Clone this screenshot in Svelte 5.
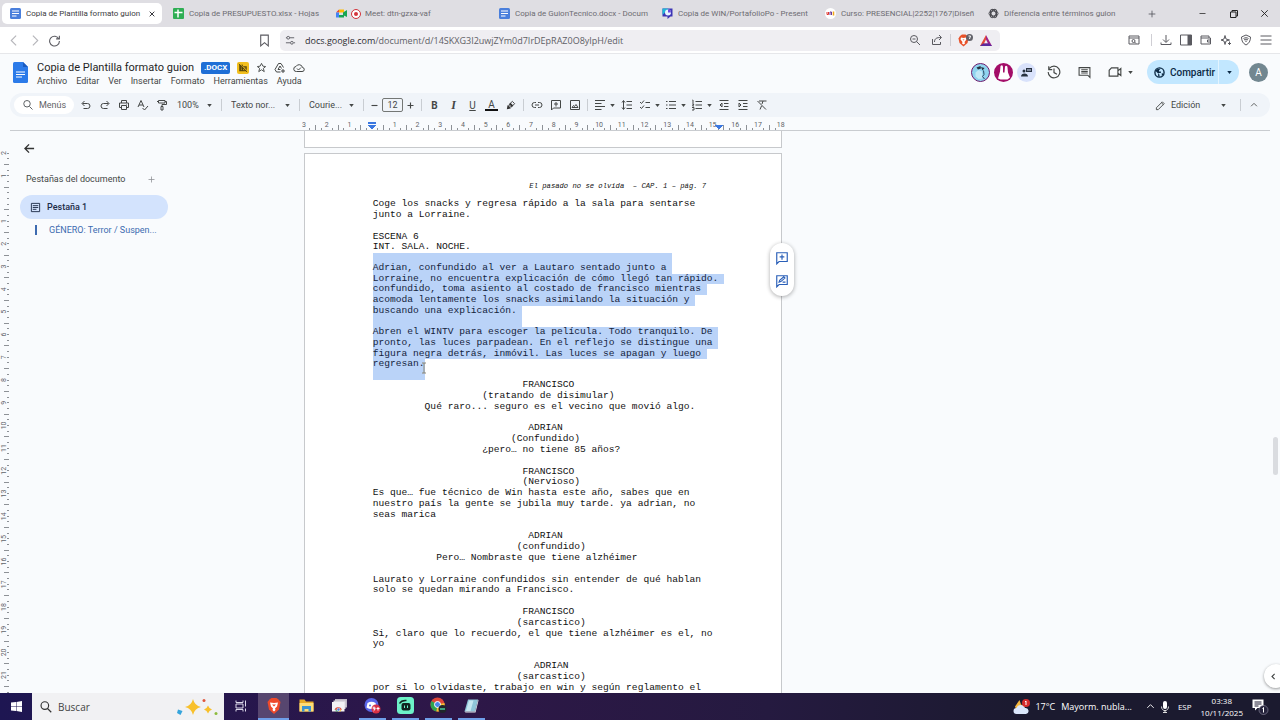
<script lang="ts">
  /** Document editor open in a browser window: tab strip, address bar,
   *  editor chrome, the script page and the desktop taskbar. */
  const TABS = [
    { icon: 'docs', title: 'Copia de Plantilla formato guion' },
    { icon: 'sheets', title: 'Copia de PRESUPUESTO.xlsx - Hojas' },
    { icon: 'meet', title: 'Meet: dtn-gzxa-vaf' },
    { icon: 'docs', title: 'Copia de GuionTecnico.docx - Docum' },
    { icon: 'slides', title: 'Copia de WIN/PortafolioPo - Present' },
    { icon: 'course', title: 'Curso: PRESENCIAL|2252|1767|Diseñ' },
    { icon: 'gpt', title: 'Diferencia entre términos guion' },
  ];

  const MENUS = ['Archivo', 'Editar', 'Ver', 'Insertar', 'Formato', 'Herramientas', 'Ayuda'];

  // stroke paths on a 24 unit grid
  const ICONS: Record<string, string> = {
    back: 'M15 3 6 12l9 9',
    forward: 'M9 3l9 9-9 9',
    reload: 'M20 9A9 9 0 1 0 21 13M21 3v6h-6',
    bookmark: 'M5 2h14v20l-7-6-7 6z',
    tune: 'M2 6h2M10 6h10M2 17h9M19 17h3M7 3a3 3 0 1 0 0 6 3 3 0 1 0 0-6M15 14a3 3 0 1 0 0 6 3 3 0 1 0 0-6',
    zoomout: 'M10 3a7 7 0 1 0 0 14 7 7 0 1 0 0-14M15 15l7 7M7 10h6',
    share: 'M3 10v11h16v-5M7 16c0-7 4-9 13-9M16 2l5 5-5 5',
    lens: 'M2 4h20v16H2zM2 8h20M11 11a3 3 0 1 0 0 6 3 3 0 1 0 0-6M13 16l3 3',
    download: 'M12 2v14M6 11l6 6 6-6M2 17v4h20v-4',
    wallet: 'M2 4h16v4M2 4v16h19V8H2M21 12h-6v4h6',
    leo: 'M10 3l2 7 7 2-7 2-2 7-2-7-6-2 6-2zM19 15v7M16 19h6',
    vpn: 'M12 2l9 4c0 8-3 13-9 16C6 19 3 14 3 6zM7 9c3-2 7-2 10 0M8 12c3-2 5-2 8 0M10 15c1-1 3-1 4 0',
    menu: 'M1 4h22M1 12h22M1 20h22',
    plus: 'M12 4v16M4 12h16',
    minus: 'M4 12h16',
    close: 'M5 5l14 14M19 5 5 19',
    search: 'M10 3a6 6 0 1 0 0 13 6 6 0 1 0 0-13M15 15l6 6',
    star: 'M12 3l3 6 6 1-5 4 2 7-6-4-6 4 2-7-5-4 6-1z',
    drive: 'M13 20H5l-3-5L9 3h5l5 8M8 15l4-7 3 5M8 15h5M18 14v8M14 18h8',
    cloud: 'M7 19h11a4 4 0 0 0 1-8A7 7 0 0 0 6 9a5 5 0 0 0 1 10zM8 13l3 3 5-5',
    undo: 'M7 19h8a5 5 0 0 0 0-10H5M9 4 4 9l5 5',
    redo: 'M17 19H9A5 5 0 0 1 9 9h10M15 4l5 5-5 5',
    print: 'M7 8V3h10v5M7 17H3V8h18v9h-4M7 13h10v8H7zM17 11h1',
    spell: 'M2 16 8 3l6 13M4 12h8M11 18l4 4 7-8',
    paint: 'M5 3h13v5H5zM18 5h3v6h-9v4M10 15h4v7h-4zM5 5H2',
    link: 'M10 7H7a5 5 0 0 0 0 10h3M14 7h3a5 5 0 0 1 0 10h-3M8 12h8',
    comment: 'M3 3h18v15H7l-4 4zM12 6v9M8 10h8',
    image: 'M3 3h18v18H3zM6 17h12l-4-6-3 4-2-2z',
    align: 'M2 3h20M2 9h13M2 15h20M2 21h13',
    spacing: 'M5 4v16M2 7l3-4 3 4M2 17l3 4 3-4M11 5h11M11 12h11M11 19h11',
    check: 'M2 6l3 3 5-6M2 16l3 3 5-6M13 7h9M13 17h9',
    bullets: 'M8 5h14M8 12h14M8 19h14M2 5h3M2 12h3M2 19h3',
    numbers: 'M9 5h13M9 12h13M9 19h13M3 2h1v6M2 10h4l-3 4h3M2 17h4v5H2',
    outdent: 'M3 3h18M12 9h9M12 15h9M3 21h18M8 8l-4 4 4 4z',
    indent: 'M3 3h18M12 9h9M12 15h9M3 21h18M4 8l4 4-4 4z',
    clear: 'M6 4h15M14 4l-2 6M11 14l-3 7M3 4l17 17',
    pencil: 'M3 21v-4L16 4l4 4L7 21zM14 6l4 4',
    up: 'M5 15l7-7 7 7',
    history: 'M4 6a10 10 0 1 1-2 6M3 2v6h6M12 6v7l5 3',
    notes: 'M2 3h20v18l-4-4H2zM6 7h12M6 10h12M6 13h12',
    video: 'M6 5h11v14H2V9zM17 10l5-4v12l-5-4z',
    arrow: 'M22 12H3M11 3l-9 9 9 9',
    tab: 'M3 3h18v18H3zM6 8h12M6 12h12M6 16h8',
    suggest: 'M3 3h18v15H7l-4 4zM7 14l1-3 7-6 2 2-7 6zM13 14h5',
    left: 'M15 5l-7 7 7 7',
  };

  type Line = { text: string; mark?: boolean; before?: boolean; after?: boolean };

  const LINES: Line[] = [
    { text: 'Coge los snacks y regresa rápido a la sala para sentarse' },
    { text: 'junto a Lorraine.' },
    { text: '' },
    { text: 'ESCENA 6' },
    { text: 'INT. SALA. NOCHE.' },
    { text: 'Adrian, confundido al ver a Lautaro sentado junto a ', mark: true, before: true },
    { text: 'Lorraine, no encuentra explicación de cómo llegó tan rápido. ', mark: true },
    { text: 'confundido, toma asiento al costado de francisco mientras ', mark: true },
    { text: 'acomoda lentamente los snacks asimilando la situación y ', mark: true },
    { text: 'buscando una explicación. ', mark: true, after: true },
    { text: 'Abren el WINTV para escoger la película. Todo tranquilo. De ', mark: true },
    { text: 'pronto, las luces parpadean. En el reflejo se distingue una ', mark: true },
    { text: 'figura negra detrás, inmóvil. Las luces se apagan y luego ', mark: true },
    { text: 'regresan.', mark: true, after: true },
    { text: '                          FRANCISCO' },
    { text: '                   (tratando de disimular)' },
    { text: '         Qué raro... seguro es el vecino que movió algo.' },
    { text: '' },
    { text: '                           ADRIAN' },
    { text: '                        (Confundido)' },
    { text: '                   ¿pero… no tiene 85 años?' },
    { text: '' },
    { text: '                          FRANCISCO' },
    { text: '                          (Nervioso)' },
    { text: 'Es que… fue técnico de Win hasta este año, sabes que en' },
    { text: 'nuestro país la gente se jubila muy tarde. ya adrian, no' },
    { text: 'seas marica' },
    { text: '' },
    { text: '                           ADRIAN' },
    { text: '                         (confundido)' },
    { text: '           Pero… Nombraste que tiene alzhéimer' },
    { text: '' },
    { text: 'Laurato y Lorraine confundidos sin entender de qué hablan' },
    { text: 'solo se quedan mirando a Francisco.' },
    { text: '' },
    { text: '                          FRANCISCO' },
    { text: '                         (sarcastico)' },
    { text: 'Si, claro que lo recuerdo, el que tiene alzhéimer es el, no' },
    { text: 'yo' },
    { text: '' },
    { text: '                            ADRIAN' },
    { text: '                         (sarcastico)' },
    { text: 'por si lo olvidaste, trabajo en win y según reglamento el' },
  ];

  // 1 cm of paper on screen, with the page zoom applied
  const CM = 22.7;
  const across = Array.from({ length: 22 }, (_, i) => i - 3);
  const down = Array.from({ length: 24 }, (_, i) => i - 2);

  let activeTab = $state(0);
  let fontSize = $state(12);
</script>

{#snippet icon(name: string, size = 12, width = 2)}
  <svg class="ico" viewBox="0 0 24 24" width={size} height={size} stroke-width={width} aria-hidden="true">
    <path d={ICONS[name]} />
  </svg>
{/snippet}

{#snippet caret()}
  <svg class="caret" viewBox="0 0 6 4" width="5" height="3" aria-hidden="true"><path d="M0 0h6L3 4z" /></svg>
{/snippet}

{#snippet tool(name: string, label: string)}
  <button class="tool" aria-label={label}>{@render icon(name, 12, 2)}</button>
{/snippet}

{#snippet toolMenu(name: string, label: string)}
  <button class="tool wide" aria-label={label}>{@render icon(name, 12, 2)}{@render caret()}</button>
{/snippet}

{#snippet favicon(name: string)}
  <svg class="fav" viewBox="0 0 22 22" width="11" height="11" aria-hidden="true">
    {#if name === 'docs'}
      <rect width="22" height="22" rx="3" fill="#4a7fdc" />
      <path d="M4 6h14M4 11h14M4 16h9" stroke="#fff" stroke-width="2" />
    {:else if name === 'sheets'}
      <rect width="22" height="22" rx="2" fill="#2fae54" />
      <path d="M10 3v16M3 9h16" stroke="#fff" stroke-width="3" />
    {:else if name === 'meet'}
      <path d="M0 9l6-6v6z" fill="#ea4335" />
      <path d="M6 3h10v6H6z" fill="#fbbc04" />
      <path d="M0 9h6v10H0z" fill="#4285f4" />
      <path d="M6 14h10v5H6zM14 9l8-5v14l-8-4z" fill="#18a551" />
    {:else if name === 'slides'}
      <path d="M1 1h20v16h-4l-6 5v-5H1z" fill="#3d35b5" />
      <path d="M1 1h12L1 14z" fill="#22b8d8" />
      <circle cx="12" cy="9" r="6" fill="#e8f5ff" />
      <path d="M12 9V3a6 6 0 0 1 6 6z" fill="#6d4be0" />
    {:else if name === 'course'}
      <circle cx="11" cy="11" r="11" fill="#fff" />
      <path d="M4 8v5h3V8" stroke="#e0342c" stroke-width="2" fill="none" />
      <path d="M10 14V8h3v6" stroke="#6a3a9c" stroke-width="2" fill="none" />
      <path d="M17 7v8" stroke="#f2a71b" stroke-width="3" />
    {:else}
      <g fill="none" stroke="#46464c" stroke-width="2">
        <ellipse cx="11" cy="11" rx="9" ry="5" />
        <ellipse cx="11" cy="11" rx="9" ry="5" transform="rotate(60 11 11)" />
        <ellipse cx="11" cy="11" rx="9" ry="5" transform="rotate(120 11 11)" />
      </g>
    {/if}
  </svg>
{/snippet}

<div class="screen">
  <div class="tabs">
    {#each TABS as t, i}
      <button class="tab" class:active={activeTab === i} onclick={() => (activeTab = i)}>
        {@render favicon(t.icon)}
        {#if t.icon === 'meet'}<span class="rec"></span>{/if}
        <span class="tab-title">{t.title}</span>
        {#if activeTab === i}{@render icon('close', 8, 3)}{/if}
      </button>
    {/each}
    <button class="newtab" aria-label="Nueva pestaña">{@render icon('plus', 10, 2)}</button>
    <div class="winbtns">
      <button aria-label="Minimizar">{@render icon('minus', 9, 2)}</button>
      <button aria-label="Restaurar">
        <svg class="ico" viewBox="0 0 16 16" width="8" height="8" stroke-width="2"><path d="M1 4h11v11H1zM4 4V1h11v11h-3" /></svg>
      </button>
      <button aria-label="Cerrar">{@render icon('close', 11, 2)}</button>
    </div>
  </div>

  <div class="address">
    <div class="nav">
      <button class="dim" aria-label="Atrás">{@render icon('back', 13, 2)}</button>
      <button class="dim" aria-label="Adelante">{@render icon('forward', 13, 2)}</button>
      <button aria-label="Recargar">{@render icon('reload', 13, 2)}</button>
    </div>
    <button class="bm" aria-label="Marcador">{@render icon('bookmark', 13, 2)}</button>
    <div class="urlbar">
      {@render icon('tune', 11, 2)}
      <a class="url" href="#doc"><b>docs.google.com</b>/document/d/14SKXG3I2uwjZYm0d7IrDEpRAZ0O8yIpH/edit</a>
      <button class="zo" aria-label="Alejar">{@render icon('zoomout', 12, 2)}</button>
      <button aria-label="Compartir página">{@render icon('share', 12, 2)}</button>
      <span class="vsep"></span>
      <button aria-label="Escudo">
        <svg viewBox="0 0 30 26" width="15" height="13">
          <path d="M4 4l4-3h7l4 3 2 5-2 9-8 7-8-7-2-9z" fill="#e8522a" />
          <path d="M6 7l5 1 5-1 1 4-4 5 1 3-3 2-3-2 1-3-4-5z" fill="#fff" />
          <path d="M9 11l2 2 2-2z" fill="#e8522a" />
          <circle cx="23" cy="7" r="7" fill="#62626a" />
          <path d="M21 4h4l-2 6" fill="none" stroke="#fff" stroke-width="2" />
        </svg>
      </button>
      <button aria-label="Recompensas">
        <svg viewBox="0 0 24 22" width="12" height="11">
          <path d="M12 0 0 22h12l0-5H8l4-8z" fill="#e2483b" />
          <path d="M12 0l12 22H12v-5h4l-4-8z" fill="#a0238a" />
          <path d="M0 22h24l-6-5H6z" fill="#5b2a9e" />
        </svg>
      </button>
    </div>
    <div class="exts">
      <button aria-label="Buscar con lente">{@render icon('lens', 12, 2)}</button>
      <span class="vsep"></span>
      <button aria-label="Descargas">{@render icon('download', 12, 2)}</button>
      <button aria-label="Panel lateral">
        <svg viewBox="0 0 24 24" width="12" height="12"><path d="M1 2h22v20H1z" fill="none" stroke="#5a5a60" stroke-width="2" /><path d="M15 2h8v20h-8z" fill="#5a5a60" /></svg>
      </button>
      <button aria-label="Cartera">{@render icon('wallet', 12, 2)}</button>
      <button aria-label="Asistente">{@render icon('leo', 12, 2)}</button>
      <button aria-label="VPN">{@render icon('vpn', 12, 2)}</button>
      <button aria-label="Menú">{@render icon('menu', 12, 2)}</button>
    </div>
  </div>

  <header class="head">
    <svg class="logo" viewBox="0 0 30 42" width="15" height="21" aria-hidden="true">
      <path d="M3 0h17l10 10v29a3 3 0 0 1-3 3H3a3 3 0 0 1-3-3V3a3 3 0 0 1 3-3z" fill="#2c7be9" />
      <path d="M20 0l10 10H20z" fill="#1a5bc0" />
      <path d="M6 20h18M6 25h18M6 30h12" stroke="#fff" stroke-width="2" />
    </svg>
    <div class="titles">
      <div class="title-row">
        <h1>Copia de Plantilla formato guion</h1>
        <span class="ext">.DOCX</span>
        <span class="badge">
          <svg viewBox="0 0 24 24" width="10" height="10"><path d="M3 4h9v4h9v12H3z" fill="#54430a" /><path d="M7 8h2M7 12h2M7 16h2M12 12h6M12 16h6" stroke="#f2bf1d" stroke-width="2" /><path d="M4 1l20 20" stroke="#f2bf1d" stroke-width="2" /><path d="M2 2l20 20" stroke="#54430a" stroke-width="2" /></svg>
        </span>
        <button aria-label="Destacar">{@render icon('star', 11, 2)}</button>
        <button aria-label="Añadir a Drive">{@render icon('drive', 12, 2)}</button>
        <button aria-label="Estado del documento">{@render icon('cloud', 12, 2)}</button>
      </div>
      <nav class="menus">
        {#each MENUS as m}
          <button>{m}</button>
        {/each}
      </nav>
    </div>
    <div class="people">
      <svg viewBox="0 0 38 38" width="19" height="19" aria-hidden="true">
        <circle cx="19" cy="19" r="18" fill="#8fd4ef" stroke="#6d1b6d" stroke-width="2" />
        <path d="M11 9l8-3 1 5-6 2zM20 8l7 2-4 5z" fill="#27313f" />
        <path d="M9 19l6-5 7 3 1 14-8 1-6-5z" fill="#c0e8f6" />
        <path d="M25 15l1 8-3 4 4 5" fill="none" stroke="#2c4963" stroke-width="2" />
      </svg>
      <svg viewBox="0 0 38 38" width="19" height="19" aria-hidden="true">
        <circle cx="19" cy="19" r="19" fill="#a30d68" />
        <path d="M8 31l4-14 1-11c3-3 5-1 5 3v10h3l1-12c2-3 5-1 5 2l1 10 4 10-5 4H13z" fill="#fff" />
      </svg>
      <svg viewBox="0 0 38 38" width="19" height="19" aria-hidden="true">
        <circle cx="19" cy="19" r="19" fill="#d9e2fb" />
        <circle cx="14" cy="16" r="3" fill="#27313f" />
        <path d="M8 27c0-8 14-8 14 0zM18 10h12v8H18z" fill="#27313f" />
        <path d="M20 14h8" stroke="#d9e2fb" stroke-width="2" />
      </svg>
    </div>
    <button class="hbtn" aria-label="Historial">{@render icon('history', 14, 2)}</button>
    <button class="hbtn" aria-label="Comentarios">{@render icon('notes', 13, 2)}</button>
    <button class="hbtn meet" aria-label="Videollamada">{@render icon('video', 14, 2)}{@render caret()}</button>
    <div class="share">
      <button class="share-main">
        <svg viewBox="0 0 24 24" width="11" height="11"><circle cx="12" cy="12" r="10" fill="none" stroke="#0c2a45" stroke-width="3" /><path d="M3 8l6 6v6l3 2v-5l-3-4h6v-3h-4V7l4-4-9 2zM17 13l4 2-4 5z" fill="#0c2a45" /></svg>
        Compartir
      </button>
      <button class="share-more" aria-label="Opciones para compartir">{@render caret()}</button>
    </div>
    <button class="me" aria-label="Cuenta">A</button>
  </header>

  <div class="toolbar">
    <button class="find">{@render icon('search', 12, 2)}Menús</button>
    {@render tool('undo', 'Deshacer')}
    {@render tool('redo', 'Rehacer')}
    {@render tool('print', 'Imprimir')}
    {@render tool('spell', 'Ortografía')}
    {@render tool('paint', 'Copiar formato')}
    <label class="pick zoom"><select aria-label="Zoom"><option>100%</option></select>{@render caret()}</label>
    <span class="sep"></span>
    <label class="pick para"><select aria-label="Estilos"><option>Texto nor...</option></select>{@render caret()}</label>
    <span class="sep"></span>
    <label class="pick face"><select aria-label="Fuente"><option>Courie...</option></select>{@render caret()}</label>
    <span class="sep"></span>
    <button class="step" aria-label="Reducir" onclick={() => (fontSize -= 1)}>{@render icon('minus', 9, 3)}</button>
    <input class="size" aria-label="Tamaño de fuente" bind:value={fontSize} />
    <button class="step" aria-label="Aumentar" onclick={() => (fontSize += 1)}>{@render icon('plus', 9, 3)}</button>
    <span class="sep"></span>
    <button class="tool letter"><b>B</b></button>
    <button class="tool letter serif"><i>I</i></button>
    <button class="tool letter"><u>U</u></button>
    <button class="tool letter"><span class="ink">A</span></button>
    <button class="tool" aria-label="Resaltar">
      <svg viewBox="0 0 24 24" width="11" height="11"><path d="M8 11l8-8 5 5-8 8z" fill="none" stroke="#333" stroke-width="2" /><path d="M6 11l7 7-3 1-6 1 1-6zM9 9l3-3 6 6-3 3z" fill="#333" /></svg>
    </button>
    <span class="sep"></span>
    {@render tool('link', 'Enlace')}
    {@render tool('comment', 'Comentario')}
    {@render tool('image', 'Imagen')}
    <span class="sep"></span>
    {@render toolMenu('align', 'Alinear')}
    {@render tool('spacing', 'Interlineado')}
    {@render toolMenu('check', 'Lista de control')}
    {@render toolMenu('bullets', 'Viñetas')}
    {@render toolMenu('numbers', 'Lista numerada')}
    {@render tool('outdent', 'Reducir sangría')}
    {@render tool('indent', 'Aumentar sangría')}
    {@render tool('clear', 'Borrar formato')}
    <button class="mode">{@render icon('pencil', 11, 2)}<span>Edición</span>{@render caret()}</button>
    <span class="sep"></span>
    <button class="tool" aria-label="Ocultar menús">{@render icon('up', 10, 2)}</button>
  </div>

  <div class="ruler">
    <svg width="490" height="12" aria-hidden="true">
      {#each across as n, i}
        {#if n !== 0}
          <text x={6 + i * CM} y="9" text-anchor="middle">{Math.abs(n)}</text>
        {/if}
        {#if i < 21}
          <path d="M{6 + (i + 0.25) * CM} 10v2M{6 + (i + 0.5) * CM} 7v5M{6 + (i + 0.75) * CM} 10v2" />
        {/if}
      {/each}
      <path class="stop" d="M70 4h8v2h-8zM70 7h8l-4 5z" />
      <path class="stop" d="M417 7h8l-4 5z" />
    </svg>
  </div>

  <main class="work">
    <svg class="vruler" width="10" height="562" aria-hidden="true">
      {#each down as n, i}
        {@const y = 22 + i * CM}
        {#if n !== 0}
          <text transform="translate(6 {y}) rotate(-90)" text-anchor="middle">{Math.abs(n)}</text>
        {/if}
        <path d="M7 {y}h2M7 {y + CM / 4}h2M4 {y + CM / 2}h5M7 {y + (CM * 3) / 4}h2" />
      {/each}
    </svg>

    <aside class="outline">
      <button class="back" aria-label="Cerrar panel">{@render icon('arrow', 11, 3)}</button>
      <div class="outline-head">
        <h2>Pestañas del documento</h2>
        <button aria-label="Añadir pestaña">{@render icon('plus', 9, 2)}</button>
      </div>
      <button class="doctab">{@render icon('tab', 11, 2)}Pestaña 1</button>
      <a class="heading" href="#genero">GÉNERO: Terror / Suspen...</a>
    </aside>

    <div class="canvas">
      <div class="sheet prev"></div>
      <article class="sheet">
        <p class="running">El pasado no se olvida&nbsp; – CAP. 1 – pág. 7</p>
        {#each LINES as l}
          <div class="line">
            {#if l.mark}<mark class:before={l.before} class:after={l.after}>{l.text}</mark>{:else}{l.text}{/if}
          </div>
        {/each}
      </article>
      <svg class="ibeam" viewBox="0 0 6 12" width="6" height="12" aria-hidden="true">
        <path d="M1 1h4M3 1v10M1 11h4" fill="none" stroke="#8b8674" stroke-width="1" />
      </svg>
      <div class="float">
        <button aria-label="Añadir comentario">{@render icon('comment', 14, 2)}</button>
        <button aria-label="Sugerir cambios">{@render icon('suggest', 14, 2)}</button>
      </div>
    </div>
    <span class="thumb"></span>
    <button class="expand" aria-label="Mostrar panel lateral">{@render icon('left', 9, 3)}</button>
  </main>

  <footer class="taskbar">
    <button class="start" aria-label="Inicio">
      <svg viewBox="0 0 22 22" width="11" height="11"><path d="M0 3l10-1v8H0zM11 2l11-2v10H11zM0 11h10v9L0 19zM11 11h11v11l-11-2z" fill="#fff" /></svg>
    </button>
    <label class="tsearch">
      {@render icon('search', 14, 2)}
      <input placeholder="Buscar" aria-label="Buscar" />
      <svg viewBox="0 0 84 36" width="42" height="18" aria-hidden="true">
        <path d="M34 2q3 13 16 16-13 3-16 16-3-13-16-16 13-3 16-16z" fill="#f8c02c" />
        <path d="M64 15q2 6 8 8-6 2-8 8-2-6-8-8 6-2 8-8z" fill="#f8c02c" />
        <path d="M4 23l9 3-4 8-7-4z" fill="#35a4dc" />
        <circle cx="56" cy="5" r="3" fill="#e0563b" />
        <circle cx="80" cy="31" r="3" fill="#8dbb3e" />
      </svg>
    </label>
    <button class="task" aria-label="Vista de tareas">
      <svg viewBox="0 0 24 24" width="12" height="12" fill="none" stroke="#dcd9ea" stroke-width="2"><path d="M2 1v4h14V1M2 23v-4h14v4M2 8h14v8H2zM21 1v12M21 17v6" /></svg>
    </button>
    <button class="task open current" aria-label="Brave">
      <svg viewBox="0 0 28 32" width="14" height="16"><path d="M5 3l4-3h10l4 3 4 5-3 15-10 9-10-9L1 8z" fill="#ee4a2b" /><path d="M6 9l8 1 8-1-2 8-4 4 1 3-3 3-3-3 1-3-4-4z" fill="#fff" /><path d="M10 13l4 4 4-4z" fill="#ee4a2b" /></svg>
    </button>
    <button class="task" aria-label="Explorador">
      <svg viewBox="0 0 30 26" width="15" height="13"><path d="M1 1h10l3 4h15v20H1z" fill="#e7a928" /><path d="M1 8h28v17H1z" fill="#ffdc77" /><path d="M6 14h18v11h-5v-5h-8v5H6z" fill="#3c93d1" /></svg>
    </button>
    <button class="task" aria-label="Chrome perfil">
      <svg viewBox="0 0 30 26" width="15" height="13"><path d="M6 0h24v17H6z" fill="#bdb6c4" /><path d="M3 3h24v17H3z" fill="#dcd8df" /><path d="M0 6h25v19H0z" fill="#f4f2f5" /><path d="M5 21a8 8 0 0 1 15 0l-7 2z" fill="#de4a3c" /><path d="M5 20l4 5h4z" fill="#33a457" /><path d="M20 20l-3 5h-4z" fill="#f4c02c" /><circle cx="13" cy="21" r="3" fill="#477fe0" stroke="#fff" /></svg>
    </button>
    <button class="task open" aria-label="Discord">
      <svg viewBox="0 0 34 34" width="17" height="17"><circle cx="15" cy="16" r="14" fill="#5966e8" /><path d="M7 12q8-5 16 0l2 9q-10 6-20 0z" fill="#fff" /><circle cx="12" cy="17" r="2" fill="#5966e8" /><circle cx="24" cy="24" r="9" fill="#d93145" /><path d="M22 22a2 2 0 1 0-4 0 2 2 0 1 0 4 0q0 5-3 6M28 20v7M25 23h6" fill="none" stroke="#fff" stroke-width="2" /></svg>
    </button>
    <button class="task open" aria-label="Grabadora">
      <svg viewBox="0 0 34 34" width="17" height="17"><rect width="34" height="34" rx="7" fill="#6df2c8" /><rect x="9" y="12" width="18" height="15" rx="4" fill="#11241f" /><path d="M5 13q4-7 14-6" fill="none" stroke="#11241f" stroke-width="3" /><path d="M15 17v5M21 17v5" stroke="#6df2c8" stroke-width="2" /></svg>
    </button>
    <button class="task open" aria-label="Chrome">
      <svg viewBox="0 0 34 34" width="17" height="17"><circle cx="15" cy="15" r="14" fill="#e0473a" /><path d="M15 15 3 8a14 14 0 0 0 10 21z" fill="#2da44f" /><path d="M15 15l-2 14A14 14 0 0 0 29 12z" fill="#f5c231" /><circle cx="15" cy="15" r="6" fill="#4a86e8" stroke="#fff" stroke-width="2" /><circle cx="25" cy="24" r="8" fill="#20262c" /><path d="M20 24h10" stroke="#48cf9c" stroke-width="3" /></svg>
    </button>
    <button class="task open" aria-label="Bloc de notas">
      <svg viewBox="0 0 30 28" width="15" height="14"><path d="M8 1h20l-6 24H1z" fill="#8fc6d8" /><path d="M10 3h9l-6 21H4z" fill="#c6e8f1" /><path d="M28 1l1 2-6 24H3l-2-2h21z" fill="#e7eef0" /></svg>
    </button>
    <div class="tray">
      <svg viewBox="0 0 34 32" width="17" height="16" aria-hidden="true">
        <path d="M13 2l3 9 9 4-18 8-3-8z" fill="#f5b63c" />
        <path d="M7 30a6 6 0 0 1 0-12 9 9 0 0 1 17 0 6 6 0 0 1 2 12z" fill="#dbe7fb" />
        <circle cx="26" cy="8" r="8" fill="#d52b2b" /><path d="M24 6l2-2v8" fill="none" stroke="#fff" stroke-width="2" />
      </svg>
      <span class="temp">17°C</span>
      <span class="sky">Mayorm. nubla...</span>
      {@render icon('up', 11, 2)}
      <svg class="mic" viewBox="0 0 16 24" width="8" height="12" aria-hidden="true"><rect x="4" width="8" height="16" rx="4" fill="#fff" /><path d="M1 11c0 11 14 11 14 0M8 19v4M4 23h8" fill="none" stroke="#ddd" stroke-width="2" /></svg>
      <span class="lang">ESP</span>
      <div class="clock"><span>03:38</span><span>10/11/2025</span></div>
      <svg viewBox="0 0 34 32" width="17" height="16" aria-hidden="true"><path d="M1 1h22v17H11l-5 5v-5H1z" fill="#fff" /><path d="M5 6h14M5 10h14M5 14h8" stroke="#1d1a33" stroke-width="2" /><circle cx="23" cy="22" r="9" fill="#25233c" stroke="#aaa8bd" stroke-width="1" /><path d="M21 19l2-2v10" fill="none" stroke="#fff" stroke-width="2" /></svg>
    </div>
  </footer>
</div>

<style>
  :global(body) {
    overflow: hidden;
  }
  .screen {
    height: 100vh;
    display: flex;
    flex-direction: column;
    background: #f9fbfd;
    color: #444746;
    font-family: Roboto, sans-serif;
    font-size: 9px;
    overflow: hidden;
  }
  button,
  input,
  select {
    font: inherit;
    color: inherit;
    background: none;
    border: 0;
    padding: 0;
    margin: 0;
  }
  button {
    display: flex;
    align-items: center;
    justify-content: center;
    cursor: pointer;
    white-space: nowrap;
  }
  svg {
    display: block;
    flex: none;
  }
  .ico {
    fill: none;
    stroke: currentColor;
  }
  .caret {
    fill: currentColor;
  }

  .tabs {
    flex: none;
    display: flex;
    align-items: center;
    height: 27px;
    padding-left: 2px;
    background: #dfdee3;
    font-size: 8px;
    color: #6d6c72;
  }
  .tab {
    flex: 0 1 163px;
    min-width: 0;
    height: 21px;
    padding: 0 4px 0 8px;
    gap: 5px;
    justify-content: flex-start;
    border-radius: 5px;
  }
  .tab.active {
    flex-basis: 160px;
    margin-right: 3px;
    padding-right: 6px;
    background: #fff;
    color: #3b3b40;
  }
  .tab-title {
    flex: 1;
    min-width: 0;
    overflow: hidden;
    text-align: left;
  }
  .rec {
    flex: none;
    width: 4px;
    height: 4px;
    border: 2px solid #fff;
    border-radius: 50%;
    outline: 1px solid #d3333b;
    background: #d3333b;
  }
  .newtab {
    width: 18px;
    color: #55555b;
  }
  .winbtns {
    margin-left: auto;
    display: flex;
    color: #222;
  }
  .winbtns button {
    width: 31px;
    height: 27px;
  }

  .address {
    flex: none;
    display: flex;
    align-items: center;
    height: 26px;
    padding: 0 8px;
    background: #fff;
    border-bottom: 1px solid #e6e7ea;
    color: #5a5a60;
  }
  .nav {
    display: flex;
    gap: 7px;
  }
  .dim {
    color: #b5b5ba;
  }
  .bm {
    margin-left: 197px;
    margin-right: 9px;
  }
  .urlbar {
    flex: 0 1 707px;
    min-width: 0;
    height: 21px;
    display: flex;
    align-items: center;
    gap: 7px;
    padding: 0 8px 0 5px;
    border-radius: 5px;
    background: #efeef2;
    font-family: 'Open Sans', sans-serif;
  }
  .url {
    flex: 1;
    margin-left: 2px;
    color: #606066;
    text-decoration: none;
    white-space: nowrap;
  }
  .url b {
    font-weight: 400;
    color: #2c2c31;
  }
  .zo {
    margin-right: 3px;
  }
  .vsep {
    width: 1px;
    height: 12px;
    background: #cfced4;
  }
  .exts {
    margin-left: auto;
    display: flex;
    align-items: center;
    gap: 8px;
  }
  .exts .vsep {
    margin-left: 3px;
  }

  .head {
    flex: none;
    display: flex;
    align-items: center;
    height: 36px;
    padding: 0 12px 0 13px;
  }
  .titles {
    margin-left: 9px;
    padding-top: 3px;
    flex: 1;
  }
  .title-row {
    display: flex;
    align-items: center;
    gap: 7px;
    height: 14px;
  }
  h1 {
    margin: 0;
    font-size: 11px;
    font-weight: 400;
    color: #1f1f1f;
    white-space: nowrap;
  }
  .ext {
    padding: 0 3px;
    border-radius: 2px;
    background: #1f6fd6;
    color: #fff;
    font-size: 8px;
    font-weight: 700;
    line-height: 12px;
  }
  .badge {
    padding: 1px;
    border-radius: 2px;
    background: #f2bf1d;
  }
  .menus {
    display: flex;
    gap: 9px;
    height: 12px;
  }
  .people {
    display: flex;
    gap: 4px;
    margin-right: 11px;
  }
  .hbtn {
    width: 14px;
    margin-right: 16px;
  }
  .meet {
    width: 27px;
    gap: 6px;
    margin-right: 13px;
  }
  .share {
    display: flex;
    height: 24px;
    margin-right: 10px;
    border-radius: 12px;
    background: #c2e7ff;
    color: #0c2a45;
    font-size: 10px;
    font-weight: 500;
  }
  .share-main {
    width: 72px;
    gap: 5px;
    padding-left: 4px;
    border-right: 1px solid #e3f4ff;
  }
  .share-more {
    width: 20px;
  }
  .me {
    width: 19px;
    height: 19px;
    border-radius: 50%;
    background: #728790;
    color: #fff;
    font-size: 10px;
  }

  .toolbar {
    flex: none;
    display: flex;
    align-items: center;
    height: 24px;
    margin: 3px 10px 0;
    padding: 0 7px 0 4px;
    border-radius: 12px;
    background: #f0f4f9;
  }
  .find {
    width: 60px;
    height: 18px;
    gap: 5px;
    margin-right: 2px;
    border-radius: 9px;
    background: #fff;
    color: #5f6366;
  }
  .tool {
    width: 19px;
    height: 19px;
  }
  .wide {
    width: 26px;
    gap: 4px;
  }
  .letter {
    font-size: 10px;
  }
  .serif {
    font-family: 'Liberation Serif', serif;
    font-size: 12px;
    font-weight: 700;
  }
  .ink {
    line-height: 9px;
    padding: 0 3px;
    border-bottom: 2px solid #111;
  }
  .pick {
    display: flex;
    align-items: center;
    padding: 0 6px;
  }
  .pick select {
    appearance: none;
    flex: 1;
    min-width: 0;
  }
  .zoom {
    width: 35px;
  }
  .para {
    width: 59px;
  }
  .face {
    width: 45px;
  }
  .sep {
    width: 1px;
    height: 12px;
    margin: 0 3px;
    background: #c9cdd2;
  }
  .step {
    width: 15px;
  }
  .size {
    width: 19px;
    height: 12px;
    border: 1px solid #747775;
    border-radius: 2px;
    text-align: center;
  }
  .mode {
    width: 90px;
    margin-left: auto;
    gap: 5px;
    padding: 0 11px 0 8px;
    justify-content: flex-start;
  }
  .mode span {
    flex: 1;
    text-align: left;
  }

  .ruler {
    flex: none;
    height: 12px;
    margin: 1px 10px 0;
    padding-left: 288px;
    border-bottom: 1px solid #c9ccd0;
  }
  .ruler svg,
  .vruler {
    fill: #5f6368;
    stroke: none;
    font-size: 7px;
  }
  .ruler path,
  .vruler path {
    stroke: #8d9196;
    stroke-width: 1;
    fill: none;
    shape-rendering: crispEdges;
  }
  .ruler .stop {
    fill: #3b78e0;
    stroke: none;
  }

  .work {
    flex: 1;
    min-height: 0;
    display: flex;
    position: relative;
    overflow: hidden;
  }
  .outline {
    flex: 0 0 294px;
    display: flex;
    flex-direction: column;
    align-items: flex-start;
  }
  .back {
    margin: 12px 0 0 14px;
    color: #333;
  }
  .outline-head {
    display: flex;
    align-items: center;
    justify-content: space-between;
    width: 130px;
    margin: 19px 0 0 16px;
    color: #8b8e91;
  }
  h2 {
    margin: 0;
    font-size: 9px;
    line-height: 12px;
    font-weight: 400;
    color: #444746;
    white-space: nowrap;
  }
  .doctab {
    width: 148px;
    height: 24px;
    margin: 10px 0 0 10px;
    padding-left: 10px;
    gap: 6px;
    justify-content: flex-start;
    border-radius: 12px;
    background: #d3e3fd;
    color: #1c2b46;
    font-weight: 500;
  }
  .heading {
    margin: 6px 0 0 25px;
    padding-left: 12px;
    border-left: 2px solid #3d6bb0;
    color: #3d6bb0;
    line-height: 10px;
    text-decoration: none;
    white-space: nowrap;
  }

  .canvas {
    position: relative;
    align-self: flex-start;
  }
  /* A4 at 96 dpi, shown at 60% */
  .sheet {
    zoom: 0.6;
    box-sizing: border-box;
    width: 797px;
    min-height: 1123px;
    padding: 46px 0 0 113px;
    border: 1px solid #c7c9cc;
    background: #fff;
    color: #111;
    font-family: 'Liberation Mono', monospace;
    font-size: 16px;
  }
  .prev {
    min-height: 0;
    height: 28px;
    padding: 0;
    margin-bottom: 8px;
    border-top: 0;
  }
  .running {
    margin: 0 125px 12px 0;
    text-align: right;
    font-size: 12px;
    font-style: italic;
    line-height: 18px;
  }
  .line {
    min-height: 18px;
    line-height: 18px;
    white-space: pre;
  }
  mark {
    display: inline-block;
    vertical-align: top;
    background: #bad3f8;
    color: #14233c;
  }
  .before {
    padding-top: 16px;
  }
  .after {
    padding-bottom: 17px;
  }
  .ibeam {
    position: absolute;
    top: 231px;
    left: 117px;
  }
  .float {
    position: absolute;
    top: 112px;
    right: -12px;
    width: 24px;
    height: 53px;
    display: flex;
    flex-direction: column;
    align-items: center;
    justify-content: space-evenly;
    border-radius: 12px;
    background: #fff;
    box-shadow: 0 1px 4px #0005;
    color: #2a5fb8;
  }
  .thumb {
    position: absolute;
    right: 2px;
    top: 306px;
    width: 5px;
    height: 38px;
    border-radius: 3px;
    background: #dadce0;
  }
  .expand {
    position: absolute;
    right: -8px;
    bottom: 5px;
    width: 24px;
    height: 24px;
    padding-right: 6px;
    border-radius: 50%;
    background: #fff;
    box-shadow: 0 1px 3px #0006;
  }

  .taskbar {
    flex: none;
    display: flex;
    height: 27px;
    background: linear-gradient(to right, #1e1652, #2e1748 35%, #251a40 60%, #1b1a2f 80%);
    color: #fff;
    font-family: 'Open Sans', sans-serif;
  }
  .start {
    width: 32px;
  }
  .tsearch {
    box-sizing: border-box;
    width: 192px;
    display: flex;
    align-items: center;
    gap: 5px;
    padding: 0 6px 0 7px;
    background: #f1f1f3;
    color: #333;
    font-size: 10px;
  }
  .tsearch input {
    flex: 1;
    min-width: 0;
  }
  .tsearch input::placeholder {
    color: #444;
    opacity: 1;
  }
  .task {
    box-sizing: border-box;
    width: 27px;
    margin: 0 3px;
    border-bottom: 2px solid transparent;
  }
  .open {
    border-bottom-color: #6f9fe8;
  }
  .current {
    width: 31px;
    margin: 0 1px;
    background: #57466f;
  }
  .tray {
    margin-left: auto;
    display: flex;
    align-items: center;
    padding-right: 11px;
    white-space: nowrap;
  }
  .temp {
    margin: 0 6px 0 5px;
  }
  .sky {
    margin-right: 13px;
  }
  .mic {
    margin: 0 9px 0 5px;
  }
  .lang {
    font-size: 8px;
  }
  .clock {
    display: flex;
    flex-direction: column;
    align-items: center;
    margin: 0 9px;
    font-size: 8px;
    line-height: 12px;
  }
</style>
